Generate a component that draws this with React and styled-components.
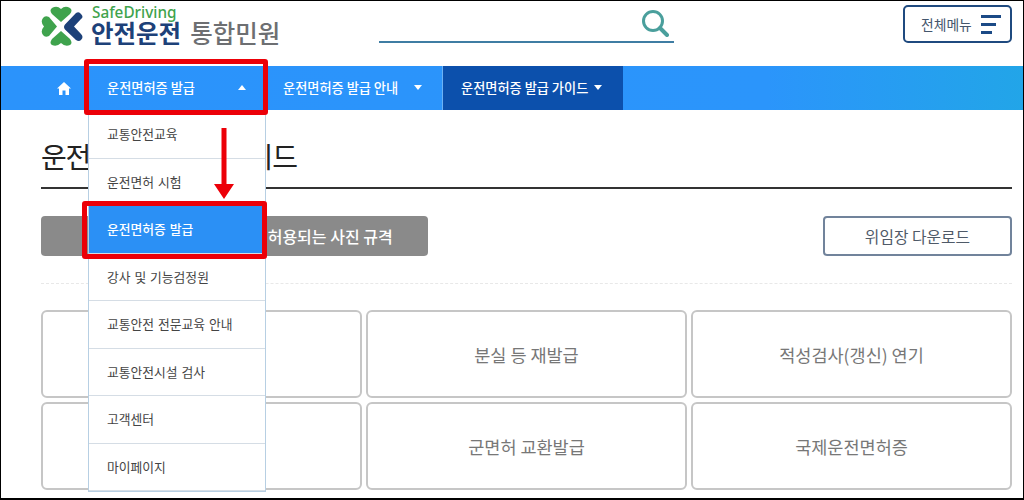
import styled, { createGlobalStyle } from "styled-components";

const GlobalStyle = createGlobalStyle`
  html, body {
    margin: 0;
    padding: 0;
    background: #ffffff;
  }
  body {
    font-family: "Noto Sans CJK KR", "Noto Sans", sans-serif;
  }
`;

const Frame = styled.div`
  width: 1024px;
  height: 500px;
  box-sizing: border-box;
  border-top: 1px solid #000;
  border-left: 1px solid #000;
  border-right: 1px solid #000;
  border-bottom: 2px solid #000;
  overflow: hidden;
  background: #fff;
`;

const Header = styled.header`
  height: 65px;
  box-sizing: border-box;
  padding: 4px 11px 0 40px;
  display: flex;
  align-items: flex-start;
`;

const Logo = styled.div`
  display: flex;
  align-items: flex-start;
  gap: 6px;
  width: 338px;
  margin-top: 1px;
`;

const LogoText = styled.div`
  display: flex;
  flex-direction: column;
  margin-top: -2px;
`;

const LogoSub = styled.span`
  font-family: "Noto Sans", sans-serif;
  font-size: 15.300px;
  line-height: 17px;
  font-weight: 500;
  margin-left: 1px;
  color: #3fa34d;
`;

const LogoMain = styled.div`
  display: flex;
  gap: 9px;
  font-size: 24.500px;
  line-height: 24px;
`;

const LogoStrong = styled.span`
  font-weight: 700;
  color: #1d4179;
`;

const LogoLight = styled.span`
  font-weight: 500;
  color: #6d6f72;
`;

const Search = styled.div`
  width: 295px;
  height: 38px;
  box-sizing: border-box;
  border-bottom: 2px solid #3f7da3;
  display: flex;
  justify-content: flex-end;
  padding: 4px 5px 0 0;
`;

const MenuButton = styled.button`
  margin-left: auto;
  width: 109px;
  height: 38px;
  box-sizing: border-box;
  border: 2px solid #1f4a7f;
  border-radius: 5px;
  background: #fff;
  padding: 0 9px 0 16px;
  display: flex;
  align-items: center;
  justify-content: space-between;
  font-family: inherit;
  font-size: 13.800px;
  white-space: nowrap;
  color: #44566c;
`;

const MenuBars = styled.span`
  display: flex;
  flex-direction: column;
  gap: 5px;
  width: 20px;
`;

const MenuBar = styled.i`
  display: block;
  height: 3px;
  width: ${(p) => p.$w}px;
  background: #1b4a86;
`;

const Nav = styled.nav`
  height: 44px;
  padding-left: 40px;
  display: flex;
  background: linear-gradient(90deg, #2b93fb 0%, #2b95fb 75%, #22a5e8 100%);
  color: #fff;
`;

const HomeLink = styled.a`
  width: 47px;
  display: flex;
  align-items: center;
  padding-left: 16px;
  box-sizing: border-box;
`;

const NavItem = styled.div`
  position: relative;
  width: ${(p) => p.$w}px;
  box-sizing: border-box;
  display: flex;
  align-items: center;
  gap: ${(p) => p.$gap || 0}px;
  justify-content: ${(p) => (p.$spread ? "space-between" : "flex-start")};
  padding: 0 20px 2px ${(p) => p.$pad}px;
  font-size: 13.200px;
  font-weight: 500;
  white-space: nowrap;
  background: ${(p) => (p.$dark ? "#0c50ac" : "transparent")};
  border-left: ${(p) => (p.$dark ? "1px solid #6cb2f5" : "none")};
`;

const Caret = styled.span`
  width: 0;
  height: 0;
  border-left: 4.500px solid transparent;
  border-right: 4.500px solid transparent;
  ${(p) => (p.$up ? "border-bottom: 5px solid #fff;" : "border-top: 5px solid #fff;")}
`;

const Highlight = styled.div`
  position: absolute;
  top: ${(p) => p.$top}px;
  bottom: ${(p) => p.$bottom}px;
  left: ${(p) => p.$left}px;
  right: -2px;
  border: 5px solid #ec0008;
  border-radius: 3px;
  z-index: 3;
`;

const Dropdown = styled.ul`
  position: absolute;
  top: 100%;
  left: 0;
  width: 178px;
  height: 382px;
  box-sizing: border-box;
  margin: 0;
  padding: 0;
  list-style: none;
  display: grid;
  grid-template-rows: repeat(8, 1fr);
  background: #fff;
  border: 1px solid #b7cfe3;
  z-index: 2;
`;

const DropItem = styled.li`
  position: relative;
  display: flex;
  align-items: center;
  padding: 0 0 1px 18px;
  font-size: 12.800px;
  word-spacing: 1px;
  font-weight: ${(p) => (p.$active ? 500 : 400)};
  color: ${(p) => (p.$active ? "#fff" : "#444")};
  background: ${(p) => (p.$active ? "#2b90f5" : "#fff")};
  border-bottom: 1px solid #d5dde5;
  &:last-child {
    border-bottom: none;
  }
`;

const DownArrow = styled.svg`
  position: absolute;
  top: 17px;
  left: 125px;
  z-index: 4;
`;

const Main = styled.main`
  padding: 0 11px 0 40px;
`;

const Title = styled.h2`
  margin: 0;
  height: 79px;
  box-sizing: border-box;
  padding-top: 25px;
  border-bottom: 2px solid #333;
  font-size: 28px;
  line-height: 42px;
  letter-spacing: -1.200px;
  font-weight: 400;
  color: #222;
`;

const ButtonRow = styled.div`
  display: flex;
  justify-content: space-between;
  margin-top: 27px;
  padding-bottom: 27px;
  border-bottom: 1px dashed #e8e8e8;
`;

const PhotoButton = styled.div`
  width: 387px;
  height: 40px;
  box-sizing: border-box;
  padding-left: 15px;
  display: flex;
  align-items: center;
  justify-content: center;
  border-radius: 4px;
  background: #8a8a8a;
  color: #fff;
  font-size: 16px;
  font-weight: 500;
  white-space: nowrap;
`;

const DownloadButton = styled.div`
  width: 189px;
  height: 40px;
  box-sizing: border-box;
  display: flex;
  align-items: center;
  justify-content: center;
  border: 2px solid #71839b;
  border-radius: 4px;
  color: #4f5a68;
  font-size: 15.800px;
`;

const CardGrid = styled.div`
  display: grid;
  grid-template-columns: repeat(3, 321px);
  grid-template-rows: repeat(2, 88px);
  gap: 4px;
  margin-top: 26px;
`;

const Card = styled.div`
  box-sizing: border-box;
  display: flex;
  align-items: center;
  justify-content: center;
  border: 2px solid #c6c6c6;
  border-radius: 6px;
  font-size: 17.500px;
  color: #777;
`;

const dropItems = [
  "교통안전교육",
  "운전면허 시험",
  "운전면허증 발급",
  "강사 및 기능검정원",
  "교통안전 전문교육 안내",
  "교통안전시설 검사",
  "고객센터",
  "마이페이지",
];

const cards = [
  "운전면허증 갱신",
  "분실 등 재발급",
  "적성검사(갱신) 연기",
  "영문 운전면허증",
  "군면허 교환발급",
  "국제운전면허증",
];

export default function App() {
  return (
    <Frame>
      <GlobalStyle />
      <Header>
        <Logo>
          <svg width="44" height="41" viewBox="41 6 44 41">
            <path d="M61 22 L52 14 Q49 10 52 8 Q57 5 61 9 Q65 5 70 8 Q73 10 70 14 Z" fill="#3fa34d" />
            <path d="M61 31 L70 39 Q73 43 70 45 Q65 47 61 43 Q57 47 52 45 Q49 43 52 39 Z" fill="#3fa34d" />
            <path d="M57 26.500 L49 17 Q45 15 43 18 Q40 22 44 26.500 Q40 31 43 35 Q45 38 49 36 Z" fill="#3fa34d" />
            <path d="M76 13 Q79 11 81 14 Q84 17 81 19 L74 26.500 L81 34 Q84 37 81 40 Q79 42 76 40 L65 29.500 Q63 27 65 24.500 Z" fill="#1d4179" />
          </svg>
          <LogoText>
            <LogoSub>SafeDriving</LogoSub>
            <LogoMain>
              <LogoStrong>안전운전</LogoStrong>
              <LogoLight>통합민원</LogoLight>
            </LogoMain>
          </LogoText>
        </Logo>
        <Search>
          <svg width="28" height="28" viewBox="0 0 28 28" fill="none" stroke="#4a9f9c">
            <circle cx="12" cy="12" r="9.500" strokeWidth="3" />
            <path d="M19 19 L26 26" strokeWidth="4" strokeLinecap="round" />
          </svg>
        </Search>
        <MenuButton>
          전체메뉴
          <MenuBars>
            <MenuBar $w={20} />
            <MenuBar $w={15} />
            <MenuBar $w={11} />
          </MenuBars>
        </MenuButton>
      </Header>
      <Nav>
        <HomeLink>
          <svg width="14" height="13" viewBox="0 0 14 13" fill="#fff">
            <path d="M7 0 L14 6.500 L12 6.500 L12 13 L8.500 13 L8.500 8.500 L5.500 8.500 L5.500 13 L2 13 L2 6.500 L0 6.500 Z" />
          </svg>
        </HomeLink>
        <NavItem $w={178} $pad={19} $spread>
          운전면허증 발급
          <Caret $up />
          <Highlight $top={-7} $bottom={-5} $left={-4} />
          <Dropdown>
            {dropItems.map((item, i) => (
              <DropItem key={item} $active={i === 2}>
                {item}
                {i === 2 && <Highlight $top={-5} $bottom={-6} $left={-7} />}
              </DropItem>
            ))}
            <DownArrow width="20" height="71" viewBox="0 0 20 71">
              <path d="M7.500 0 H12.500 V56 H20 L10 71 L0 56 H7.500 Z" fill="#ec0008" />
            </DownArrow>
          </Dropdown>
        </NavItem>
        <NavItem $w={176} $pad={17} $spread>
          운전면허증 발급 안내
          <Caret />
        </NavItem>
        <NavItem $w={181} $pad={18} $gap={6} $dark>
          운전면허증 발급 가이드
          <Caret />
        </NavItem>
      </Nav>
      <Main>
        <Title>운전면허증 발급 가이드</Title>
        <ButtonRow>
          <PhotoButton>운전면허증 온라인 발급 시 허용되는 사진 규격</PhotoButton>
          <DownloadButton>위임장 다운로드</DownloadButton>
        </ButtonRow>
        <CardGrid>
          {cards.map((card) => (
            <Card key={card}>{card}</Card>
          ))}
        </CardGrid>
      </Main>
    </Frame>
  );
}
